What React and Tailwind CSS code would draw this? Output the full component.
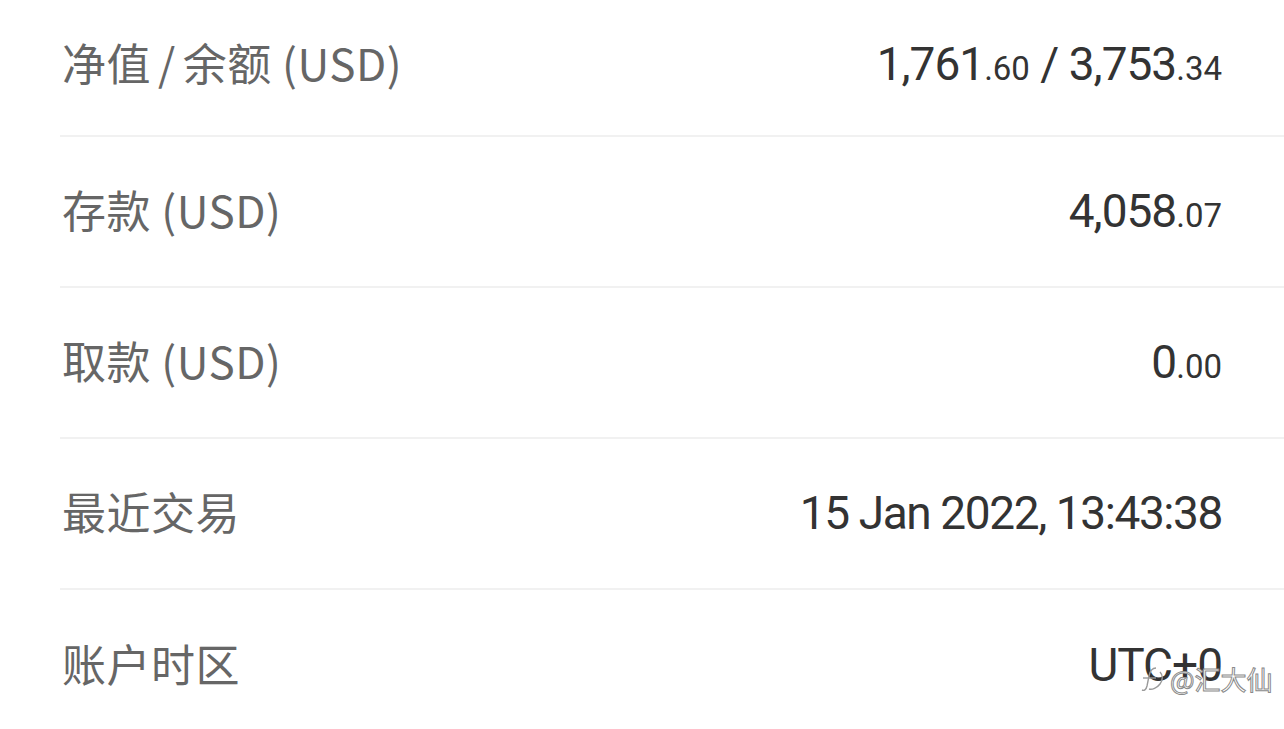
const rows = [
  { label: ["净值", "余额", " (USD)"], value: [["1,761", ".60"], " / ", ["3,753", ".34"]] },
  { label: ["存款 (USD)"], value: [["4,058", ".07"]] },
  { label: ["取款 (USD)"], value: [["0", ".00"]] },
  { label: ["最近交易"], value: ["15 Jan 2022, 13:43:38"], tight: true },
  { label: ["账户时区"], value: ["UTC+0"] },
];

const Label = ({ parts }) =>
  parts.length === 1 ? (
    parts[0]
  ) : (
    <>
      {parts[0]}
      <span className="mx-[7px]">/</span>
      {parts[1]}
      {parts[2]}
    </>
  );

const Amount = ({ parts }) => (
  <span>
    {parts.map((p, i) =>
      typeof p === "string" ? (
        <span key={i}>{p}</span>
      ) : (
        <span key={i}>
          {p[0]}
          <span className="text-[33px] tracking-[0px]">{p[1]}</span>
        </span>
      )
    )}
  </span>
);

export default function App() {
  return (
    <div className="relative w-[1284px] h-[729px] overflow-hidden bg-white">
      <div className="flex flex-col pl-[60px]">
        {rows.map((r, i) => (
          <div
            key={i}
            className={`flex items-center justify-between pr-[62px] ${i === 0 ? "h-[137px] pb-[6px]" : "h-[151px]"} ${i < rows.length - 1 ? "border-b-2 border-[#f1f1f1]" : ""}`}
          >
            <span className="pl-[2px] mb-[5px] text-[44px] text-[#666666] font-['Noto_Sans_CJK_SC',sans-serif] tracking-[0.5px] whitespace-pre">
              <Label parts={r.label} />
            </span>
            <span className={`text-[46px] text-[#333333] font-['Roboto',sans-serif] ${r.tight ? "tracking-[-1.4px]" : "tracking-[-1px]"}`}>
              <Amount parts={r.value} />
            </span>
          </div>
        ))}
      </div>

      {/* watermark */}
      <div className="absolute left-[1140px] top-[664px] flex items-center gap-[4px] text-white [-webkit-text-stroke:1px_#8a8a8a]">
        <svg width="26" height="30" viewBox="0 0 26 30" fill="none" stroke="#9a9a9a" strokeWidth="1.4">
          <path d="M16 4c-4 0-6 3-7 8l-2 10c-1 4-3 5-5 4" />
          <path d="M3 14h13" />
          <path d="M20 8c3 3 3 8 0 12s-8 6-11 5" />
        </svg>
        <span className="text-[26px] leading-none font-['Noto_Sans_CJK_SC',sans-serif]">@汇大仙</span>
      </div>
    </div>
  );
}
